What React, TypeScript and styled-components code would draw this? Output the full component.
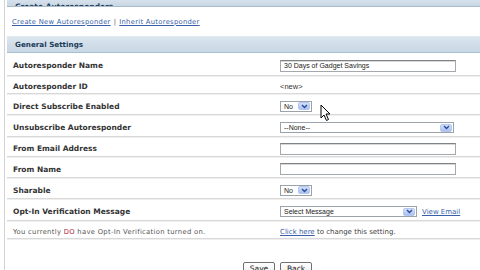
import React from "react";
import styled, { createGlobalStyle } from "styled-components";

const Global = createGlobalStyle`
  html, body { margin: 0; padding: 0; background: #fff; }
  body { font-family: "DejaVu Sans", Verdana, sans-serif; font-size: 7px; color: #333; }
`;

const Page = styled.div`
  position: relative;
  width: 476px;
  height: 270px;
  margin-left: 4px;
  border-left: 1px solid #d4d4d4;
  overflow: hidden;
`;

const Inner = styled.div`
  margin-left: 2px;
  display: flex;
  flex-direction: column;
`;

const TopBar = styled.div`
  height: 6px;
  display: flex;
  align-items: flex-end;
  overflow: hidden;
  padding-left: 8px;
  background: linear-gradient(#d6e1ec, #c9d7e3);
  border-bottom: 1px solid #a8bccb;
`;

const BarTitle = styled.span`
  font-weight: bold;
  font-size: 7.5px;
  line-height: 9px;
  color: #1d3c5a;
  margin-bottom: -5px;
`;

const LinksRow = styled.div`
  height: 29px;
  display: flex;
  align-items: center;
  padding-left: 5px;
  color: #555;
  gap: 3px;
  font-size: 6.8px;
  letter-spacing: 0.28px;
`;

const Link = styled.a`
  color: #3a5fa8;
  text-decoration: underline;
  cursor: pointer;
`;

const SectionHeader = styled.div`
  height: 15px;
  display: flex;
  align-items: center;
  padding-left: 8px;
  background: linear-gradient(#dae5ef, #c8d7e4);
  border-top: 1px solid #e4ecf2;
  border-bottom: 1px solid #aabfcd;
  font-weight: bold;
  font-size: 7.2px;
  color: #1d3c5a;
`;

const Row = styled.div<{ $h: number }>`
  height: ${(p) => p.$h - 1}px;
  box-sizing: border-box;
  padding-top: 3px;
  display: grid;
  grid-template-columns: 267px 1fr;
  align-items: center;
  padding-left: 6px;
  border-bottom: 1px solid #d9d9d9;
  box-shadow: 0 1px 0 #efefef;
  margin-bottom: 1px;
`;

const Label = styled.div<{ $plain?: boolean }>`
  font-weight: ${(p) => (p.$plain ? "normal" : "bold")};
  font-size: ${(p) => (p.$plain ? "6.8px" : "7.5px")};
  letter-spacing: ${(p) => (p.$plain ? "0.3px" : "0")};
  color: ${(p) => (p.$plain ? "#555" : "#333")};
`;

const Value = styled.div`
  display: flex;
  align-items: center;
  gap: 5px;
  color: #444;
`;

const Plain = styled.span`
  font-family: "Liberation Sans", Arial, sans-serif;
  font-size: 7.5px;
  color: #333;
`;

const Red = styled.span`
  color: #b0243a;
`;

const Input = styled.div<{ $w: number }>`
  width: ${(p) => p.$w}px;
  height: 10px;
  border: 1px solid #a4a9ae;
  border-top-color: #7e8388;
  box-shadow: inset 0 1px 0 #d8d8d8;
  background: #fff;
  display: flex;
  align-items: center;
  padding-left: 3px;
  box-sizing: content-box;
  font-family: "Liberation Sans", Arial, sans-serif;
  font-size: 7px;
  color: #222;
`;

const Select = styled.div<{ $w: number }>`
  width: ${(p) => p.$w}px;
  height: 11px;
  border: 1px solid #9aa2aa;
  background: #fff;
  display: flex;
  align-items: center;
  justify-content: space-between;
  padding-left: 3px;
  padding-right: 1px;
  box-sizing: border-box;
  font-family: "Liberation Sans", Arial, sans-serif;
  font-size: 7px;
  color: #222;
`;

const ArrowBtn = styled.span`
  width: 12px;
  height: 8px;
  border-radius: 2px;
  background: linear-gradient(#d3e0fb, #a9c0ef);
  border: 1px solid #b4c7ee;
  box-sizing: border-box;
  display: flex;
  align-items: center;
  justify-content: center;
`;

const Buttons = styled.div`
  display: flex;
  gap: 5px;
  padding-left: 236px;
  padding-top: 22px;
`;

const Button = styled.div<{ $w: number }>`
  width: ${(p) => p.$w}px;
  height: 14px;
  border: 1px solid #6f6f6f;
  border-radius: 2px;
  background: linear-gradient(#ffffff, #ececec);
  display: flex;
  justify-content: center;
  padding-top: 1px;
  box-sizing: border-box;
  font-size: 7.5px;
  color: #222;
`;

const Cursor = styled.svg`
  position: absolute;
  left: 315px;
  top: 104px;
`;

const Chevron = () => (
  <svg width="7" height="5" viewBox="0 0 7 5">
    <path d="M1 1 L3.5 3.5 L6 1" stroke="#2a4a9a" strokeWidth="1.4" fill="none" />
  </svg>
);

const Drop = ({ w, text }: { w: number; text: string }) => (
  <Select $w={w}>
    <span>{text}</span>
    <ArrowBtn>
      <Chevron />
    </ArrowBtn>
  </Select>
);

export default function App() {
  return (
    <>
      <Global />
      <Page>
        <Inner>
          <TopBar>
            <BarTitle>Create Autoresponders</BarTitle>
          </TopBar>
          <LinksRow>
            <Link>Create New Autoresponder</Link>
            <span>|</span>
            <Link>Inherit Autoresponder</Link>
          </LinksRow>
          <SectionHeader>General Settings</SectionHeader>
          <Row $h={24}>
            <Label>Autoresponder Name</Label>
            <Value>
              <Input $w={171}>30 Days of Gadget Savings</Input>
            </Value>
          </Row>
          <Row $h={18}>
            <Label>Autoresponder ID</Label>
            <Value>
              <Plain>&lt;new&gt;</Plain>
            </Value>
          </Row>
          <Row $h={21}>
            <Label>Direct Subscribe Enabled</Label>
            <Value>
              <Drop w={32} text="No" />
            </Value>
          </Row>
          <Row $h={22}>
            <Label>Unsubscribe Autoresponder</Label>
            <Value>
              <Drop w={174} text="--None--" />
            </Value>
          </Row>
          <Row $h={20}>
            <Label>From Email Address</Label>
            <Value>
              <Input $w={171} />
            </Value>
          </Row>
          <Row $h={21}>
            <Label>From Name</Label>
            <Value>
              <Input $w={171} />
            </Value>
          </Row>
          <Row $h={21}>
            <Label>Sharable</Label>
            <Value>
              <Drop w={32} text="No" />
            </Value>
          </Row>
          <Row $h={22}>
            <Label>Opt-In Verification Message</Label>
            <Value>
              <Drop w={137} text="Select Message" />
              <Link>View Email</Link>
            </Value>
          </Row>
          <Row $h={18}>
            <Label $plain>
              You currently <Red>DO</Red> have Opt-In Verification turned on.
            </Label>
            <Value>
              <span>
                <Link>Click here</Link> to change this setting.
              </span>
            </Value>
          </Row>
          <Buttons>
            <Button $w={32}>Save</Button>
            <Button $w={32}>Back</Button>
          </Buttons>
        </Inner>
        <Cursor width="12" height="18" viewBox="0 0 12 18">
          <path
            d="M1 1 L1 14 L4 11 L6.5 16.5 L8.5 15.5 L6 10 L10 10 Z"
            fill="#fff"
            stroke="#000"
            strokeWidth="1"
            strokeLinejoin="round"
          />
        </Cursor>
      </Page>
    </>
  );
}
